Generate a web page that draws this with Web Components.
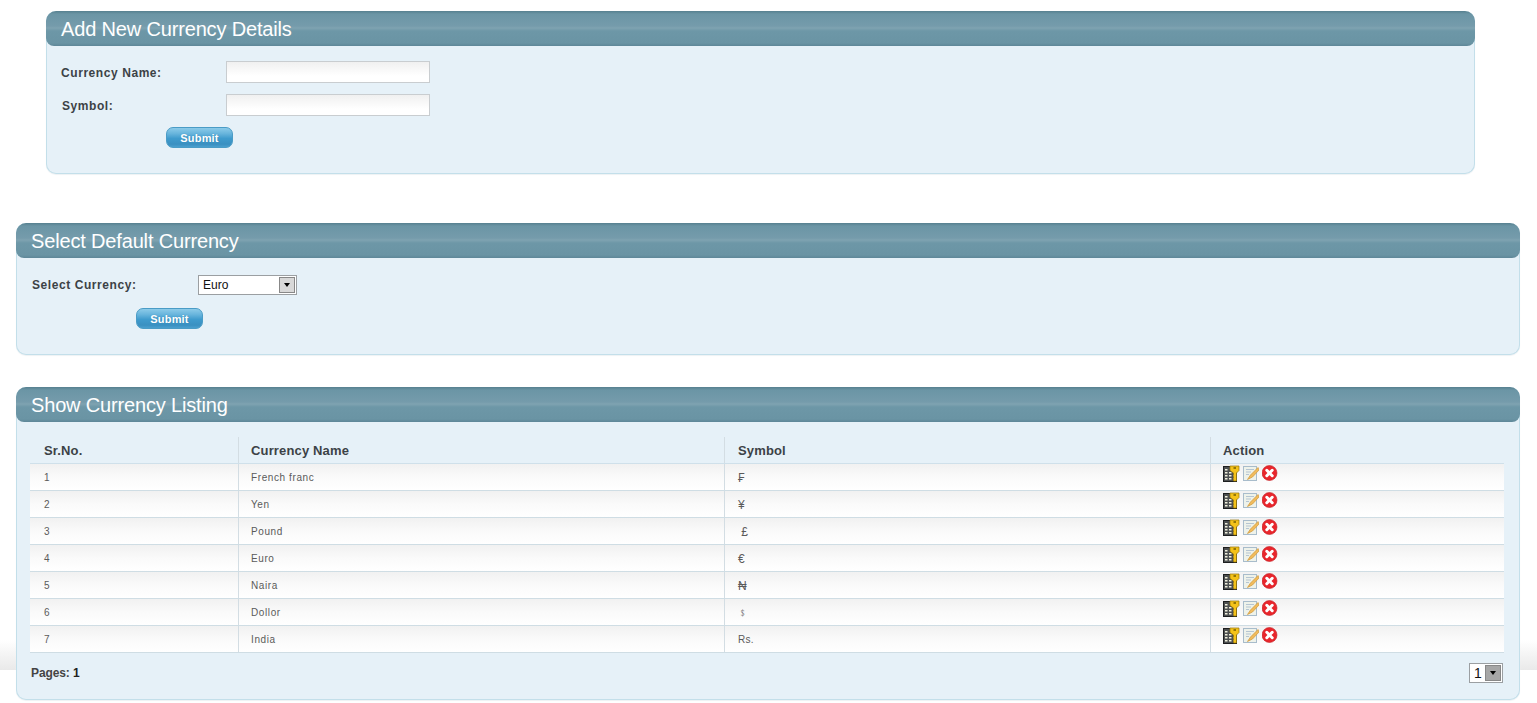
<!DOCTYPE html>
<html><head><meta charset="utf-8"><title>Currency</title>
<style>
html,body{margin:0;padding:0}
body{font-family:"Liberation Sans",Arial,sans-serif;color:#3c4246;background:#fff linear-gradient(#fff,#e9e9e9) no-repeat 0 640px/100% 30px;height:703px;overflow:hidden}
.page{padding-top:11px;display:flex;flex-direction:column}
.sym{font-size:12px;letter-spacing:0}
</style></head><body>
<div class="page">
<x-panel title="Add New Currency Details" style="margin:0 62px 0 46px;height:163px;--pad:15px">
  <x-field label="Currency Name:"><x-text></x-text></x-field>
  <x-field label="Symbol:" inset="1"><x-text></x-text></x-field>
  <x-submit>Submit</x-submit>
</x-panel>
<x-panel title="Select Default Currency" style="margin:49px 17px 0 16px;height:132px;--pad:16px">
  <x-field label="Select Currency:" kind="select"><x-select value="Euro" style="width:99px"></x-select></x-field>
  <x-submit style="margin-top:12px">Submit</x-submit>
</x-panel>
<x-panel title="Show Currency Listing" style="margin:32px 17px 0 16px;height:313px;--pad:15px">
  <x-grid>
    <x-row head><span>Sr.No.</span><span>Currency Name</span><span>Symbol</span><span>Action</span></x-row>
    <x-row><span>1</span><span>French franc</span><span class="sym">₣</span><x-actions></x-actions></x-row>
    <x-row><span>2</span><span>Yen</span><span class="sym">¥</span><x-actions></x-actions></x-row>
    <x-row><span>3</span><span>Pound</span><span class="sym">&nbsp;£</span><x-actions></x-actions></x-row>
    <x-row><span>4</span><span>Euro</span><span class="sym">€</span><x-actions></x-actions></x-row>
    <x-row><span>5</span><span>Naira</span><span class="sym">₦</span><x-actions></x-actions></x-row>
    <x-row><span>6</span><span>Dollor</span><span>﹩</span><x-actions></x-actions></x-row>
    <x-row><span>7</span><span>India</span><span style="letter-spacing:.3px">Rs.</span><x-actions></x-actions></x-row>
  </x-grid>
  <x-pager pages="1"></x-pager>
</x-panel>
</div>
<script>
const def=(name,html,init)=>customElements.define(name,class extends HTMLElement{
  connectedCallback(){ if(this.shadowRoot)return; const r=this.attachShadow({mode:'open'}); r.innerHTML=html; init&&init.call(this,r); }
});
def('x-panel',`<style>
:host{display:block;box-sizing:border-box;background:#e6f1f8;border:1px solid #c3dfea;border-top:0;border-radius:10px;box-shadow:0 1px 1px #eef2f4}
.t{height:35px;margin:0 -1px;box-sizing:border-box;border-radius:10px 10px 8px 8px;padding:6px 0 0 15px;font-size:20px;letter-spacing:-.16px;line-height:25px;color:#fff;white-space:nowrap;
 background:linear-gradient(#56808f 0,#6b95a5 3px,#759bab 15px,#7fa3b1 17px,#6d97a7 20px,#6a94a4 32px,#5e8798 35px)}
.b{padding:var(--pad) 0 0 14px}
</style><div class="t"></div><div class="b"><slot></slot></div>`,function(r){r.querySelector('.t').textContent=this.getAttribute('title')});
def('x-field',`<style>
:host{display:flex;align-items:center;min-height:22px;margin-bottom:11px;font-size:12px;font-weight:bold;letter-spacing:.57px}
label{width:165px;flex:none;box-sizing:border-box;padding-top:1px}
</style><label></label><slot></slot>`,function(r){const l=r.querySelector('label');l.textContent=this.getAttribute('label');
 if(this.getAttribute('inset')==='1')l.style.paddingLeft='1px';
 if(this.getAttribute('kind')==='select'){l.style.width='167px';l.style.paddingLeft='1px';l.style.paddingTop='0'}});
def('x-text',`<style>
:host{display:block}
input{display:block;box-sizing:border-box;width:204px;height:22px;margin:0;border:1px solid #c9cdd0;background:linear-gradient(#f0f0f0,#fff 70%);outline:0;padding:2px}
</style><input type="text">`);
def('x-select',`<style>
:host{display:flex;box-sizing:border-box;height:20px;border:1px solid #9b9fa2;background:#fff;color:#111;font-size:12px;font-weight:normal;letter-spacing:0;line-height:19px}
.v{flex:1;padding-left:4px}
.a{width:16px;margin:1px;margin-left:0;background:var(--arrow,#d8d8d8);border:1px solid #888;box-sizing:border-box;display:flex;align-items:center;justify-content:center}
.a i{width:0;height:0;border:3.5px solid transparent;border-top:4px solid #000;border-bottom:0}
</style><div class="v"></div><div class="a"><i></i></div>`,function(r){r.querySelector('.v').textContent=this.getAttribute('value')});
def('x-submit',`<style>
:host{display:flex;align-items:center;justify-content:center;box-sizing:border-box;width:67px;height:21px;margin-left:105px;border:1px solid #4a9cc6;border-radius:7px;color:#fff;font-size:11px;font-weight:bold;letter-spacing:.2px;
background:linear-gradient(#8ccbe9 0,#67b4dc 30%,#3f9bcd 55%,#3a90c1 85%,#4a9fce 100%);text-shadow:0 0 1px #3a86b0}
</style><slot></slot>`);
def('x-grid',`<style>:host{display:block;margin:0 15px 0 -1px}</style><slot></slot>`);
def('x-row',`<style>
:host{display:grid;grid-template-columns:208px 486px 486px 294px;height:27px;box-sizing:border-box;border-bottom:1px solid #cfdde4;background:linear-gradient(#f1f1f1,#fafafa 50%,#fff);font-size:10px;letter-spacing:.6px;color:#5a5a5a}
:host([head]){background:#e6f1f8;font-size:13px;font-weight:bold;letter-spacing:.15px;color:#3c4246;border-bottom-color:#cfe0ea}
::slotted(*){display:flex;align-items:center;box-sizing:border-box;padding-left:12px;border-left:1px solid #d3dde3;padding-top:1px}
::slotted(:first-child){border-left:0;padding-left:14px}
::slotted(:nth-child(3)){padding-left:13px}
</style><slot></slot>`);
def('x-actions',`<style>
:host{display:flex;align-items:flex-start !important;gap:3px;height:26px;padding-top:1px !important}
svg{display:block;flex:none}
</style>
<svg width="17" height="17" viewBox="0 0 17 17"><rect x=".5" y="1.500" width="13" height="15" fill="#4c4f50" stroke="#1d1f20"/><path d="M2 4h2.500v1.500H2zM2 7h2.500v1.500H2zM2 10h2.500v1.500H2zM2 13h2.500v1.500H2zM6 7h2.500v1.500H6zM6 10h2.500v1.500H6zM6 13h2.500v1.500H6zM10 10h2.500v1.500H10zM10 13h2.500v1.500H10z" fill="#f0f0dc"/><path d="M7 1h9v4.500l-2.500 2.500v8h-3V8L7 5.500z" fill="#f4c21a" stroke="#96760a" stroke-width=".7"/><path d="M10.500 3h2.500" stroke="#6b5600" stroke-width="1.400"/></svg>
<svg width="16" height="17" viewBox="0 0 16 17"><rect x=".5" y="1.500" width="13" height="14" fill="#eef2ea" stroke="#a8bccb"/><path d="M3 4.500h8M3 7h5M3 9.500h3" stroke="#b5c5d2"/><path d="M15 2.500 7.500 10 4.500 14.500l5-2.500 6.500-7z" fill="#f1bb5c" stroke="#d09a3a" stroke-width=".7"/></svg>
<svg width="16" height="17" viewBox="0 0 16 17"><circle cx="7.500" cy="8" r="7.500" fill="#e8262c" stroke="#c21c22" stroke-width=".6"/><path d="M4.800 5.300l5.400 5.400M10.200 5.300l-5.400 5.400" stroke="#fff" stroke-width="3" stroke-linecap="round"/></svg>`);
def('x-pager',`<style>
:host{display:flex;align-items:center;justify-content:space-between;margin:10px 16px 0 0;height:20px;font-size:12px;font-weight:bold;letter-spacing:-.1px;color:#444}
b{color:#222}
x-select{width:34px;font-size:14px;--arrow:#a6a6a6}
</style><span>Pages: <b></b></span><x-select value="1"></x-select>`,function(r){r.querySelector('b').textContent=this.getAttribute('pages')});
</script>
</body></html>
